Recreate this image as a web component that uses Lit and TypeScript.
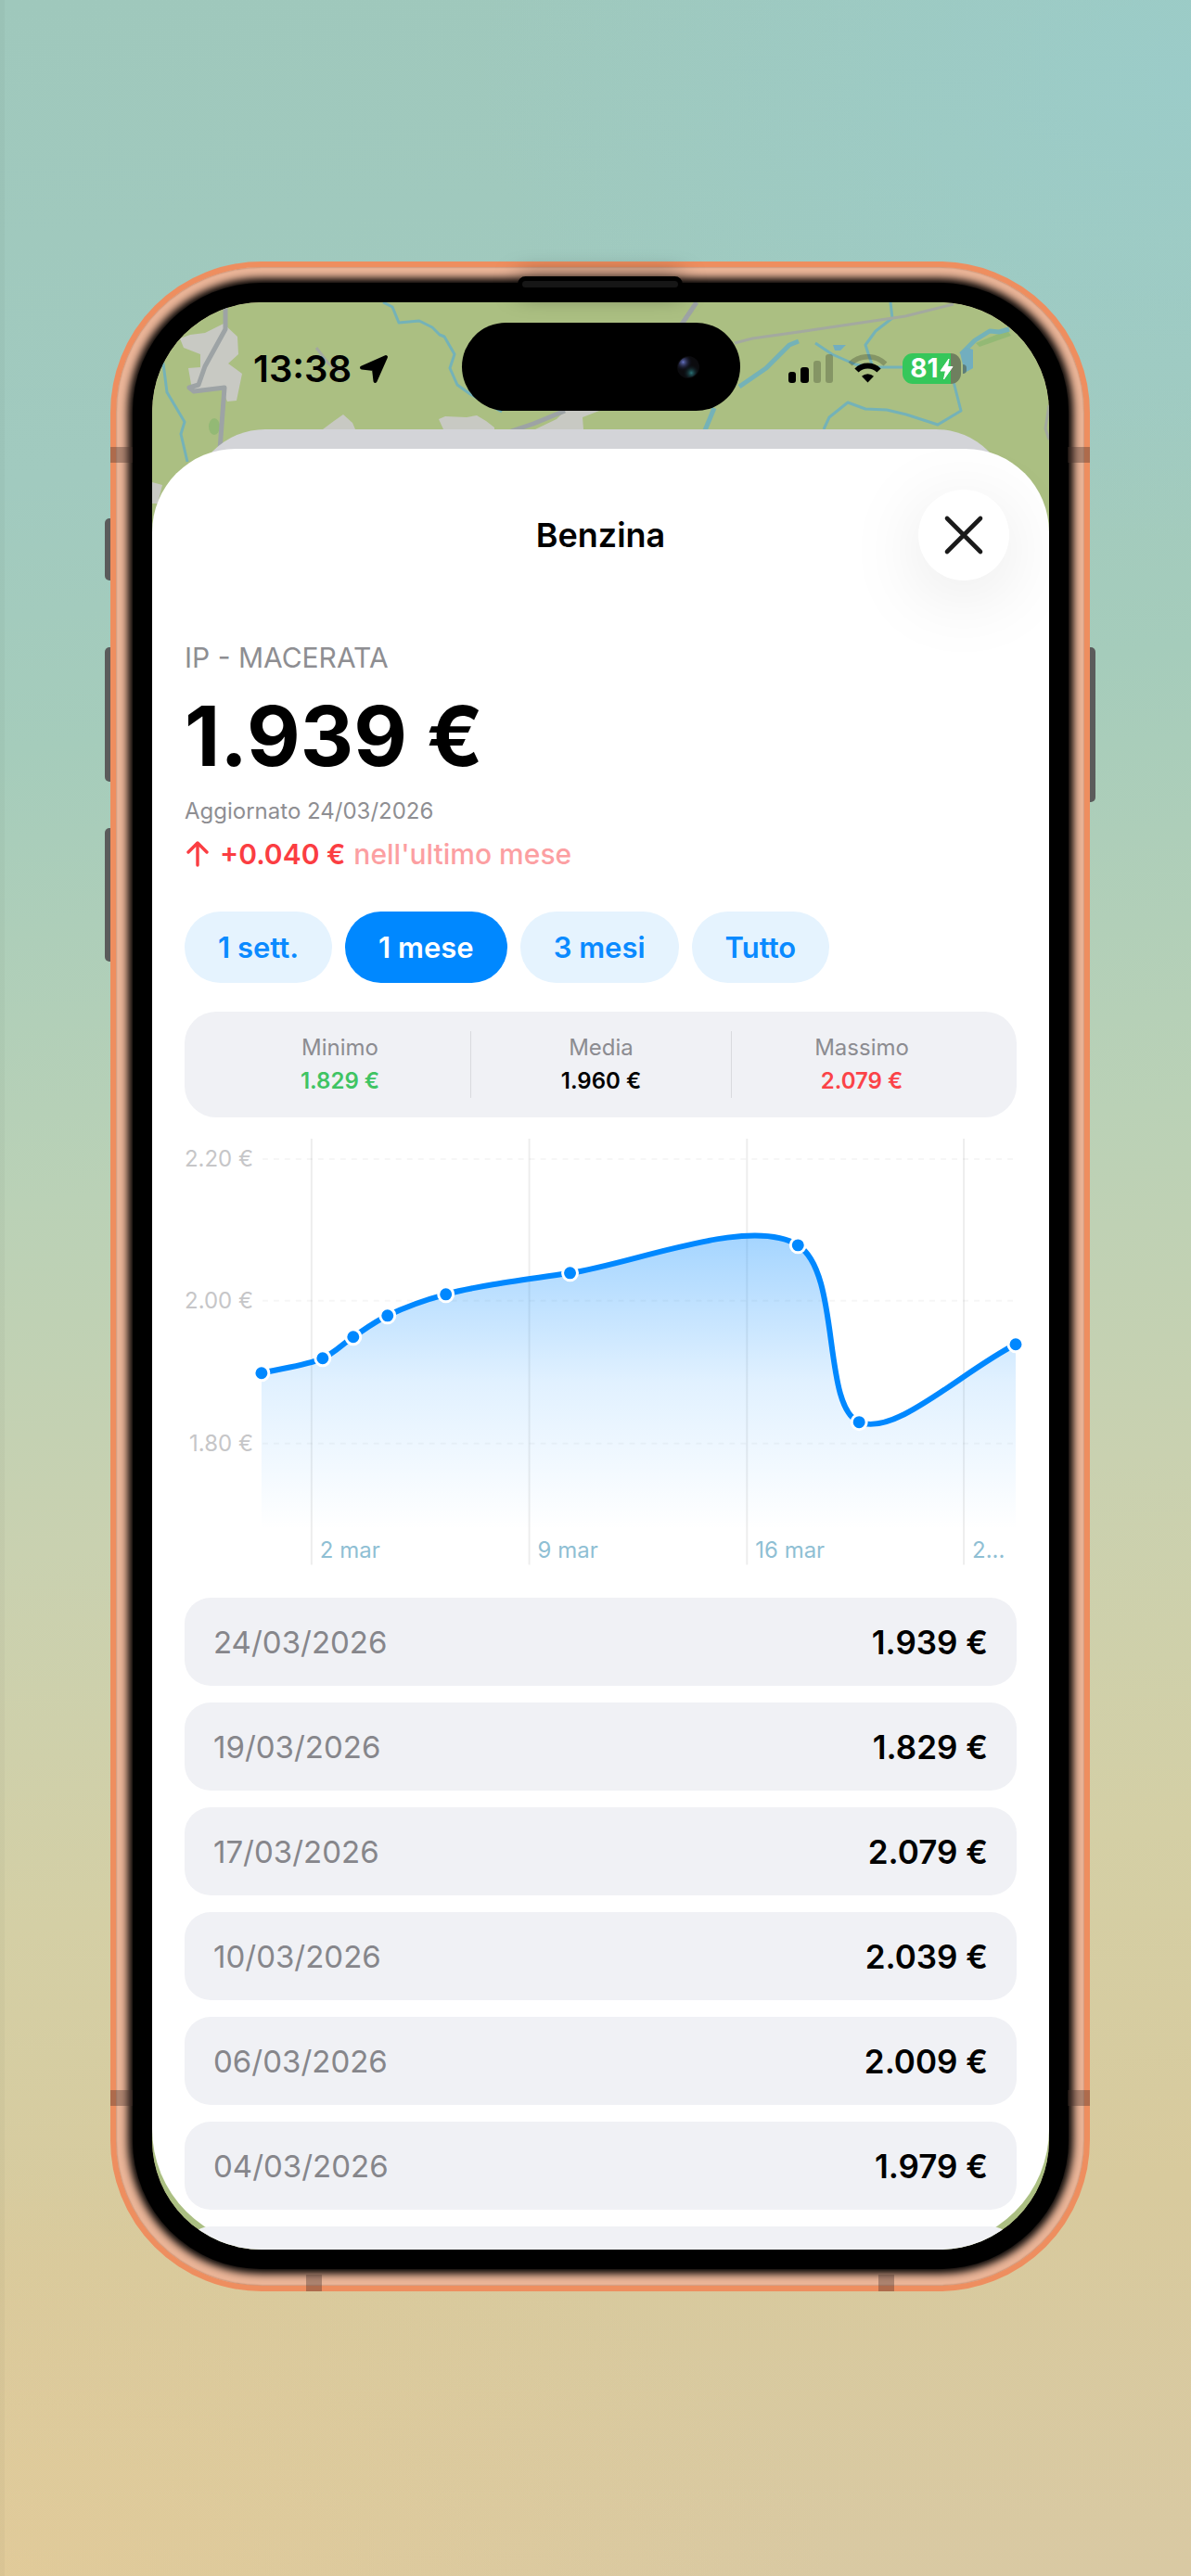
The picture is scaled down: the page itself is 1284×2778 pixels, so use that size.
import { LitElement, html, css, svg } from "lit";
import { customElement, state } from "lit/decorators.js";
import { classMap } from "lit/directives/class-map.js";

interface Point {
  x: number;
  y: number;
}

interface PriceEntry {
  date: string;
  price: string;
}

const HISTORY: PriceEntry[] = [
  { date: "24/03/2026", price: "1.939 €" },
  { date: "19/03/2026", price: "1.829 €" },
  { date: "17/03/2026", price: "2.079 €" },
  { date: "10/03/2026", price: "2.039 €" },
  { date: "06/03/2026", price: "2.009 €" },
  { date: "04/03/2026", price: "1.979 €" },
];

const RANGES = ["1 sett.", "1 mese", "3 mesi", "Tutto"];

const SAMPLES: Point[] = [
  { x: 83, y: 253 },
  { x: 149, y: 237 },
  { x: 182, y: 214 },
  { x: 219, y: 191 },
  { x: 282, y: 168 },
  { x: 416, y: 145 },
  { x: 662, y: 115 },
  { x: 728, y: 306 },
  { x: 897, y: 222 },
];

const PLOT_BOTTOM = 422;

/** Centripetal Catmull-Rom spline through the points, as cubic Béziers. */
function smoothPath(points: Point[]): string {
  const gap = (a: Point, b: Point) => Math.sqrt(Math.hypot(b.x - a.x, b.y - a.y));
  let d = `M${points[0].x} ${points[0].y}`;
  for (let i = 0; i < points.length - 1; i++) {
    const p1 = points[i];
    const p2 = points[i + 1];
    const p0 = points[i - 1] ?? p1;
    const p3 = points[i + 2] ?? p2;
    const d1 = gap(p0, p1);
    const d2 = gap(p1, p2);
    const d3 = gap(p2, p3);
    const first = (k: "x" | "y") =>
      d1 === 0
        ? p1[k] + (p2[k] - p1[k]) / 3
        : (d1 * d1 * p2[k] - d2 * d2 * p0[k] + (2 * d1 * d1 + 3 * d1 * d2 + d2 * d2) * p1[k]) /
          (3 * d1 * (d1 + d2));
    const second = (k: "x" | "y") =>
      d3 === 0
        ? p2[k] - (p2[k] - p1[k]) / 3
        : (d3 * d3 * p1[k] - d2 * d2 * p3[k] + (2 * d3 * d3 + 3 * d3 * d2 + d2 * d2) * p2[k]) /
          (3 * d3 * (d3 + d2));
    d += ` C${first("x")} ${first("y")} ${second("x")} ${second("y")} ${p2.x} ${p2.y}`;
  }
  return d;
}

@customElement("price-chart")
export class PriceChart extends LitElement {
  static styles = css`
    :host {
      display: block;
    }
    .chart {
      display: block;
      width: 100%;
      height: auto;
      overflow: visible;
      font-family: Inter, "Liberation Sans", sans-serif;
      font-size: 24px;
    }
    .grid {
      stroke: #000;
      stroke-opacity: 0.07;
      stroke-width: 2;
    }
    .level {
      stroke: #000;
      stroke-opacity: 0.035;
      stroke-width: 2;
      stroke-dasharray: 6 6;
    }
    .price {
      fill: #c6c6c8;
      text-anchor: end;
    }
    .day {
      fill: #8fbfd4;
    }
    .line {
      fill: none;
      stroke: #0088ff;
      stroke-width: 6;
      stroke-linejoin: round;
    }
    .dot {
      fill: #0088ff;
      stroke: #fff;
      stroke-width: 3;
    }
  `;

  render() {
    const line = smoothPath(SAMPLES);
    const last = SAMPLES[SAMPLES.length - 1];
    const levels = [
      { y: 22, label: "2.20 €" },
      { y: 175, label: "2.00 €" },
      { y: 329, label: "1.80 €" },
    ];
    const days = [
      { x: 137, label: "2 mar" },
      { x: 372, label: "9 mar" },
      { x: 607, label: "16 mar" },
      { x: 841, label: "2..." },
    ];
    return html`
      <svg class="chart" viewBox="0 0 898 460" role="img" aria-label="Andamento del prezzo">
        <defs>
          <linearGradient id="fill" gradientUnits="userSpaceOnUse" x1="0" y1="102" x2="0" y2=${PLOT_BOTTOM}>
            <stop offset="0" stop-color="#0088ff" stop-opacity="0.36" />
            <stop offset="0.5" stop-color="#0088ff" stop-opacity="0.12" />
            <stop offset="1" stop-color="#0088ff" stop-opacity="0" />
          </linearGradient>
        </defs>
        ${levels.map(
          (l) => svg`
            <line class="level" x1="84" x2="898" y1=${l.y} y2=${l.y}></line>
            <text class="price" x="74" y=${l.y + 8}>${l.label}</text>`,
        )}
        ${days.map(
          (d) => svg`
            <line class="grid" x1=${d.x} x2=${d.x} y1="0" y2="460"></line>
            <text class="day" x=${d.x + 9} y="453">${d.label}</text>`,
        )}
        <path d="${line} L${last.x} ${PLOT_BOTTOM} L${SAMPLES[0].x} ${PLOT_BOTTOM} Z" fill="url(#fill)"></path>
        <path class="line" d=${line}></path>
        ${SAMPLES.map((p) => svg`<circle class="dot" cx=${p.x} cy=${p.y} r="8"></circle>`)}
      </svg>
    `;
  }
}

@customElement("map-backdrop")
export class MapBackdrop extends LitElement {
  static styles = css`
    :host {
      display: block;
    }
    .map {
      display: block;
      width: 100%;
      height: auto;
    }
    .town {
      fill: #c8c9c3;
    }
    .wood {
      fill: #93b975;
    }
    .lake {
      fill: #72aebf;
    }
    .road {
      fill: none;
      stroke: #9da3a5;
      stroke-width: 5;
      stroke-linejoin: round;
    }
    .lane {
      fill: none;
      stroke: #a3a99f;
      stroke-width: 3;
    }
    .river {
      fill: none;
      stroke: #74b2b8;
      stroke-width: 3;
      stroke-linejoin: round;
    }
    .wide {
      stroke-width: 5;
    }
  `;

  render() {
    return html`
      <svg class="map" viewBox="164 326 967 240" aria-hidden="true">
        <path class="town" d="M194 365 205 361 221 359 241 349 256 363 257 382 246 392 261 403 255 432 245 433 240 421 207 420 203 397 216 396 216 382 198 375Z" />
        <path class="town" d="M348 463 360 454 370 447 380 456 383 463Z" />
        <path class="town" d="M473 452 480 449 503 450 514 448 524 454 533 461 533 463 478 463Z" />
        <path class="town" d="M577 463 600 452 609 443 646 443 628 450 629 463Z" />
        <path class="town" d="M164 520 175 523 170 543 164 543Z" />
        <ellipse class="wood" cx="231" cy="460" rx="6" ry="9" />
        <path class="wood" d="M1052 370 1086 356 1090 362 1056 374Z" />
        <path class="river" d="M174 385 176 392 180 423 199 455 195 468 202 498" />
        <path class="river" d="M413 326 423 331 430 348 452 346 466 353 474 361 479 363 490 382 485 397 493 415 507 425 541 444" />
        <path class="river wide" d="M797 417 826 397 851 372 861 368" />
        <path class="river" d="M879 370 897 382 922 393 940 396 975 396" />
        <path class="river" d="M960 326 962 343 944 357 933 372 940 393" />
        <path class="river" d="M1025 400 1036 443 1011 458 977 447 956 442 933 441 914 434 894 450 888 463" />
        <path class="river wide" d="M770 440 760 464" />
        <path class="river wide" d="M1036 382 1051 367 1067 357 1077 358 1088 355" />
        <path class="lake" d="M898 372H912L906 378H900Z" />
        <path class="lake" d="M1035 380 1042 375 1049 377V397L1040 402Z" />
        <path class="road" d="M243 326V355L221 395 214 415 204 418 209 422 242 418 237 485" />
        <path class="road" d="M551 465 575 457 609 443" />
        <path class="road" d="M751 326 734 351" />
        <path class="lane" d="M341 375 354 392 370 404" />
        <path class="lane" d="M792 370 811 365 861 358 976 341 1028 328" />
        <path class="lane" d="M1131 437 1127 462 1131 474" />
      </svg>
    `;
  }
}

@customElement("app-root")
export class AppRoot extends LitElement {
  static styles = css`
    :host {
      display: block;
      min-height: 100vh;
      box-sizing: border-box;
      padding: 282px 109px 0 119px;
      overflow: hidden;
      font-family: Inter, "Liberation Sans", sans-serif;
      color: #000;
      background:
        linear-gradient(90deg, rgba(0, 0, 0, 0.03) 5px, transparent 5px),
        radial-gradient(ellipse 60% 18% at 100% 3%, rgba(152, 206, 208, 0.6), transparent),
        radial-gradient(ellipse 70% 16% at 0% 100%, rgba(228, 203, 150, 0.7), transparent),
        linear-gradient(
          175deg,
          #9fc8bc 0%,
          #a1cabf 18%,
          #a5ccbb 28%,
          #bad1b6 45%,
          #c9d1b0 58%,
          #d4cfa5 72%,
          #d8ca9d 85%,
          #d9c9a3 100%
        );
    }
    *,
    *::before,
    *::after {
      box-sizing: border-box;
    }
    h1,
    p,
    dl,
    dd,
    ul {
      margin: 0;
      padding: 0;
    }
    button {
      border: 0;
      margin: 0;
      padding: 0;
      font: inherit;
      cursor: pointer;
    }

    .phone {
      position: relative;
      padding: 38px 38px 39px 39px;
      border: 6px solid #ee8e5f;
      border-radius: 163px;
      background: #ebb598;
      box-shadow: inset 0 0 2px rgba(110, 50, 20, 0.6);
    }
    .key {
      position: absolute;
      width: 6px;
      background: #5b5b5b;
    }
    .key-left {
      left: -12px;
      border-radius: 5px 0 0 5px;
    }
    .key-right {
      right: -12px;
      border-radius: 0 5px 5px 0;
      top: 410px;
      height: 167px;
    }
    .key-action {
      top: 271px;
      height: 67px;
    }
    .key-up {
      top: 410px;
      height: 145px;
    }
    .key-down {
      top: 605px;
      height: 144px;
    }
    .band {
      position: absolute;
      background: rgba(70, 50, 45, 0.38);
    }
    .band-side {
      width: 24px;
      height: 17px;
    }
    .band-foot {
      width: 17px;
      height: 18px;
      bottom: -6px;
    }
    .band-left {
      left: -6px;
    }
    .band-right {
      right: -6px;
    }
    .band-high {
      top: 194px;
    }
    .band-low {
      bottom: 194px;
    }
    .band-foot-a {
      left: 205px;
    }
    .band-foot-b {
      right: 205px;
    }
    .speaker {
      position: absolute;
      top: 10px;
      left: 50%;
      width: 178px;
      height: 17px;
      margin-left: -89px;
      border: 5px solid #000;
      border-radius: 9px;
      background: #161616;
      box-shadow: 0 0 24px rgba(0, 0, 0, 0.6);
    }

    .screen {
      position: relative;
      display: flex;
      flex-direction: column;
      aspect-ratio: 967 / 2100;
      overflow: hidden;
      border-radius: 118px;
      background: #abbf82;
    }
    .bezel {
      border-radius: 118px;
      box-shadow:
        0 0 0 21px #000,
        0 0 8px 26px #000;
    }
    .backdrop {
      position: absolute;
      inset: 0 0 auto;
    }
    .status {
      position: relative;
      flex: none;
      display: grid;
      grid-template-columns: 1fr 300px 1fr;
      align-items: center;
      height: 95px;
      margin: 22px 0 41px;
    }
    .clock {
      display: flex;
      align-items: center;
      gap: 8px;
      padding: 4px 0 0 109px;
      font-size: 40px;
      font-weight: 600;
      line-height: 48px;
    }
    .island {
      display: flex;
      align-items: center;
      justify-content: flex-end;
      height: 95px;
      padding-right: 44px;
      border-radius: 48px;
      background: #000;
    }
    .indicators {
      display: flex;
      align-items: center;
      justify-content: flex-end;
      gap: 16px;
      padding: 4px 89px 0 0;
    }
    .battery {
      display: flex;
      align-items: center;
      gap: 2px;
    }
    .charge {
      display: flex;
      align-items: center;
      justify-content: center;
      gap: 1px;
      width: 63px;
      height: 33px;
      border-radius: 11px;
      background: linear-gradient(90deg, #35c75a 52px, #6f7f5f 52px);
      color: #fff;
      font-size: 28px;
      font-weight: 700;
      line-height: 33px;
    }
    .nub {
      width: 4px;
      height: 10px;
      border-radius: 0 4px 4px 0;
      background: #5d7d78;
    }
    .under {
      position: absolute;
      top: 137px;
      left: 42px;
      right: 42px;
      height: 160px;
      border-radius: 80px 80px 0 0;
      background: #d3d4d8;
    }

    .sheet {
      position: relative;
      flex: 1;
      min-height: 0;
      margin-bottom: 4px;
      padding: 44px 35px 0;
      border-radius: 90px 90px 126px 126px;
      background: #fff;
    }
    .header {
      display: grid;
      grid-template-columns: 98px 1fr 98px;
      align-items: center;
      margin: 0 8px 63px;
    }
    .title {
      grid-column: 2;
      text-align: center;
      font-size: 36px;
      font-weight: 600;
      line-height: 44px;
    }
    .close {
      display: grid;
      place-items: center;
      width: 98px;
      height: 98px;
      border-radius: 50%;
      background: #fff;
      box-shadow: 0 16px 84px rgba(0, 0, 0, 0.1);
    }
    .station {
      color: #8e8e92;
      font-size: 30px;
      line-height: 40px;
    }
    .current {
      margin-top: 15px;
      font-size: 89px;
      font-weight: 700;
      line-height: 100px;
    }
    .updated {
      margin-top: 14px;
      color: #8e8e92;
      font-size: 24px;
      line-height: 33px;
    }
    .trend {
      display: flex;
      align-items: center;
      gap: 9px;
      margin-top: 12px;
      color: #fb3d42;
      font-size: 30px;
      font-weight: 600;
      line-height: 36px;
    }
    .arrow {
      margin: 0 3px 0 2px;
    }
    .period {
      color: #fc9fa2;
      font-weight: 500;
    }
    .ranges {
      display: flex;
      gap: 14px;
      margin-top: 44px;
    }
    .range {
      height: 77px;
      padding: 0 36px;
      border-radius: 39px;
      background: #e5f3fe;
      color: #0a8aff;
      font-size: 31px;
      font-weight: 600;
      line-height: 77px;
    }
    .range.on {
      background: #0088ff;
      color: #fff;
    }
    .stats {
      display: grid;
      grid-template-columns: repeat(3, 1fr);
      margin-top: 31px;
      padding: 21px 27px;
      border-radius: 34px;
      background: #f0f1f5;
      text-align: center;
      font-size: 24px;
      line-height: 36px;
    }
    .stat + .stat {
      border-left: 1px solid #d9dade;
    }
    .stat-name {
      color: #8c8c91;
    }
    .stat-value {
      font-weight: 600;
    }
    .low {
      color: #3fc463;
    }
    .high {
      color: #fb4348;
    }
    .chart {
      margin-top: 23px;
    }
    .history {
      display: flex;
      flex-direction: column;
      gap: 18px;
      margin-top: 36px;
      list-style: none;
    }
    .entry {
      display: flex;
      align-items: center;
      justify-content: space-between;
      min-height: 95px;
      padding: 0 31px;
      border-radius: 28px;
      background: #f0f1f5;
      font-size: 33px;
      line-height: 44px;
    }
    .date {
      color: #86868b;
    }
    .cost {
      font-size: 35px;
      font-weight: 600;
    }
  `;

  @state() private range = "1 mese";

  render() {
    return html`
      <main class="phone">
        <span class="key key-left key-action"></span>
        <span class="key key-left key-up"></span>
        <span class="key key-left key-down"></span>
        <span class="key key-right"></span>
        <div class="bezel">
          <div class="screen">
            <map-backdrop class="backdrop"></map-backdrop>
            <div class="under"></div>
            ${this.renderStatus()}
            <section class="sheet">
              <header class="header">
                <h1 class="title">Benzina</h1>
                <button class="close" type="button" aria-label="Chiudi">
                  <svg width="44" height="44" viewBox="0 0 44 44" aria-hidden="true">
                    <path d="M4 4 40 40M40 4 4 40" fill="none" stroke="#1a1a1a" stroke-width="4.6" stroke-linecap="round" />
                  </svg>
                </button>
              </header>
              <p class="station">IP - MACERATA</p>
              <p class="current">1.939 €</p>
              <p class="updated">Aggiornato 24/03/2026</p>
              <p class="trend">
                <svg class="arrow" width="24" height="28" viewBox="0 0 24 28" aria-hidden="true">
                  <path d="M12 26V2M2 12 12 2 22 12" fill="none" stroke="currentColor" stroke-width="3.4" stroke-linecap="round" stroke-linejoin="round" />
                </svg>
                <span>+0.040 €</span>
                <span class="period">nell'ultimo mese</span>
              </p>
              <div class="ranges">
                ${RANGES.map(
                  (r) => html`<button
                    type="button"
                    class=${classMap({ range: true, on: r === this.range })}
                    aria-pressed=${r === this.range ? "true" : "false"}
                    @click=${() => (this.range = r)}
                  >${r}</button>`,
                )}
              </div>
              <dl class="stats">
                <div class="stat">
                  <dt class="stat-name">Minimo</dt>
                  <dd class="stat-value low">1.829 €</dd>
                </div>
                <div class="stat">
                  <dt class="stat-name">Media</dt>
                  <dd class="stat-value">1.960 €</dd>
                </div>
                <div class="stat">
                  <dt class="stat-name">Massimo</dt>
                  <dd class="stat-value high">2.079 €</dd>
                </div>
              </dl>
              <price-chart class="chart"></price-chart>
              <ul class="history">
                ${HISTORY.map(
                  (e) => html`<li class="entry">
                    <span class="date">${e.date}</span>
                    <span class="cost">${e.price}</span>
                  </li>`,
                )}
                <li class="entry" aria-hidden="true"></li>
              </ul>
            </section>
          </div>
        </div>
        <span class="speaker"></span>
        <span class="band band-side band-left band-high"></span>
        <span class="band band-side band-right band-high"></span>
        <span class="band band-side band-left band-low"></span>
        <span class="band band-side band-right band-low"></span>
        <span class="band band-foot band-foot-a"></span>
        <span class="band band-foot band-foot-b"></span>
      </main>
    `;
  }

  private renderStatus() {
    return html`
      <div class="status">
        <div class="clock">
          <span>13:38</span>
          <svg width="32" height="32" viewBox="0 0 32 32" aria-hidden="true">
            <path d="M29 3 3 14.500 16 16 17.500 29Z" fill="#000" stroke="#000" stroke-width="4" stroke-linejoin="round" />
          </svg>
        </div>
        <div class="island">
          <svg width="24" height="24" viewBox="0 0 24 24" aria-hidden="true">
            <defs>
              <radialGradient id="blue" cx="0.25" cy="0.25" r="0.45">
                <stop offset="0" stop-color="#6470c0" />
                <stop offset="1" stop-color="#0a0c18" stop-opacity="0" />
              </radialGradient>
              <radialGradient id="teal" cx="0.65" cy="0.78" r="0.4">
                <stop offset="0" stop-color="#2a7376" />
                <stop offset="1" stop-color="#0a1018" stop-opacity="0" />
              </radialGradient>
            </defs>
            <circle cx="12" cy="12" r="12" fill="#0b0b0e" />
            <circle cx="12" cy="12" r="11" fill="url(#blue)" />
            <circle cx="12" cy="12" r="11" fill="url(#teal)" />
          </svg>
        </div>
        <div class="indicators">
          <svg width="48" height="31" viewBox="0 0 48 31" aria-hidden="true">
            <rect x="0" y="19" width="8" height="12" rx="3" />
            <rect x="13" y="14" width="9" height="17" rx="3" />
            <rect x="27" y="7" width="8" height="24" rx="3" fill-opacity="0.22" />
            <rect x="40" y="0" width="8" height="31" rx="3" fill-opacity="0.22" />
          </svg>
          <svg width="43" height="31" viewBox="0 0 43 31" fill="none" stroke="#000" aria-hidden="true">
            <path d="M2.500 10.500A27 27 0 0 1 40.500 10.500" stroke-width="5.500" stroke-opacity="0.22" />
            <path d="M9.500 17.500A17 17 0 0 1 33.500 17.500" stroke-width="6" />
            <path d="M21.500 30.500 15 23.800A9.500 9.500 0 0 1 28 23.800Z" fill="#000" stroke="none" />
          </svg>
          <div class="battery">
            <span class="charge">
              <span>81</span>
              <svg width="15" height="24" viewBox="0 0 15 24" aria-hidden="true">
                <path d="M10 1 1 14H6.500L4.500 23 14 9.500H8.500Z" fill="#fff" stroke="#fff" stroke-linejoin="round" />
              </svg>
            </span>
            <span class="nub"></span>
          </div>
        </div>
      </div>
    `;
  }
}
